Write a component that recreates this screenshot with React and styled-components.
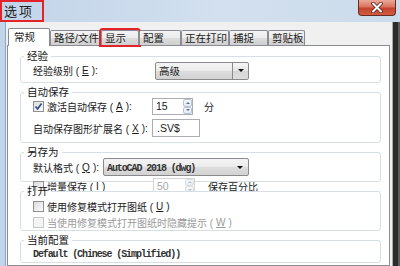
import React from "react";
import styled, { createGlobalStyle } from "styled-components";

const GlobalStyle = createGlobalStyle`
  html, body { margin: 0; padding: 0; background: #fff; }
  body { font-family: "Liberation Sans", "Noto Sans CJK SC", sans-serif; color: #1a1a1a; }
`;

const RED = "#e2232a";

const Window = styled.div`
  width: 400px;
  height: 266px;
  overflow: hidden;
  display: flex;
  flex-direction: column;
  background: linear-gradient(90deg, #c2d4e9, #d2e0ef 55%, #ccdbeb);
`;

const TitleBar = styled.div`
  flex: none;
  height: 22px;
  display: flex;
  align-items: flex-start;
  justify-content: space-between;
`;

const TitleMark = styled.div`
  box-sizing: border-box;
  width: 44px;
  height: 22px;
  border: 2px solid ${RED};
  padding-left: 2px;
  font-size: 13px;
  line-height: 19px;
  letter-spacing: 2px;
  color: #222;
`;

const CloseButton = styled.div`
  box-sizing: border-box;
  width: 38px;
  height: 16px;
  margin-right: 4px;
  border: 1px solid #6b2a22;
  border-top: none;
  border-radius: 0 0 4px 4px;
  background: linear-gradient(#eba898, #d9735f 45%, #c3432f 55%, #d25d43);
  display: flex;
  align-items: center;
  justify-content: center;
`;

const Body = styled.div`
  flex: 1;
  display: flex;
  min-height: 0;
`;

const LeftFrame = styled.div`
  width: 5px;
  border-right: 1px solid #8fa6c1;
`;

const RightFrame = styled.div`
  width: 8px;
  background: linear-gradient(90deg, #a8a8a8 0 1px, #2b2b2b 1px 6px, #5c5c5c 6px);
`;

const Client = styled.div`
  flex: 1;
  background: #f0f0f0;
  padding: 6px 2px 0 1px;
  display: flex;
  flex-direction: column;
`;

const TabStrip = styled.div`
  height: 17px;
  padding-left: 1px;
  display: flex;
  align-items: flex-end;
`;

const Tab = styled.div`
  box-sizing: border-box;
  flex: none;
  width: ${(p) => p.$w}px;
  height: ${(p) => (p.$active ? 18 : 15)}px;
  margin-bottom: ${(p) => (p.$active ? -1 : 0)}px;
  position: relative;
  z-index: ${(p) => (p.$active ? 2 : 1)};
  border: 1px solid #898c95;
  border-bottom: none;
  border-radius: 2px 2px 0 0;
  background: ${(p) => (p.$active ? "#fff" : "linear-gradient(#f3f3f3, #ebebeb 50%, #dddddd 51%, #cfcfcf)")};
  padding-left: ${(p) => (p.$active ? 5 : 3)}px;
  font-size: 10.5px;
  line-height: ${(p) => (p.$active ? 16 : 14)}px;
  white-space: nowrap;
  overflow: hidden;
  outline: ${(p) => (p.$marked ? `2px solid ${RED}` : "none")};
`;

const TabPage = styled.div`
  flex: 1;
  background: #fff;
  border: 1px solid #898c95;
  padding: 4px 8px 0 12px;
  display: flex;
  flex-direction: column;
  gap: 3px;
`;

const Group = styled.fieldset`
  flex: none;
  margin: 0;
  min-width: 0;
  border: 1px solid #d5dfe5;
  border-radius: 3px;
  padding: 0 8px ${(p) => p.$pb ?? 0}px 12px;
  position: ${(p) => (p.$cover ? "relative" : "static")};
  background: #fff;
  display: flex;
  flex-direction: column;
  gap: ${(p) => p.$gap ?? 0}px;
`;

const Legend = styled.legend`
  margin-left: -9px;
  padding: 0 3px;
  font-size: 10.5px;
  line-height: 12px;
  color: #151515;
`;

const Clip = styled.div`
  height: ${(p) => p.$h}px;
  display: flex;
  flex-direction: column;
`;

const Row = styled.div`
  flex: none;
  height: ${(p) => p.$h}px;
  margin-top: ${(p) => p.$mt ?? 0}px;
  display: flex;
  align-items: center;
  font-size: 10px;
  white-space: nowrap;
  color: ${(p) => (p.$disabled ? "#9a9a9a" : "#1a1a1a")};
`;

const Label = styled.span`
  flex: none;
  width: ${(p) => p.$w}px;
  display: flex;
  align-items: center;
  gap: 3px;
`;

const Box = styled.span`
  box-sizing: border-box;
  flex: none;
  width: 11px;
  height: 11px;
  border: 1px solid ${(p) => (p.$disabled ? "#c6c6c6" : "#8e8f8f")};
  background: ${(p) => (p.$disabled ? "#f4f4f4" : "linear-gradient(135deg, #dcdcdc, #fbfbfb)")};
  display: flex;
  align-items: center;
  justify-content: center;
`;

const Combo = styled.div`
  box-sizing: border-box;
  flex: none;
  width: ${(p) => p.$w}px;
  height: 18px;
  border: 1px solid #8a8a8a;
  border-radius: 2px;
  background: linear-gradient(#f4f4f4, #ebebeb 50%, #dddddd 51%, #d2d2d2);
  display: flex;
  align-items: center;
`;

const ComboText = styled.span`
  flex: 1;
  padding-left: 3px;
  font-size: 10.5px;
`;

const Arrow = styled.span`
  box-sizing: border-box;
  width: 16px;
  height: 16px;
  border-left: ${(p) => (p.$split ? "1px solid #8a8a8a" : "none")};
  border-radius: 0 2px 2px 0;
  background: ${(p) => (p.$split ? "linear-gradient(#f7f7f7, #e4e4e4 50%, #d6d6d6 51%, #dedede)" : "transparent")};
  display: flex;
  align-items: center;
  justify-content: center;
  &::after {
    content: "";
    border-left: 3px solid transparent;
    border-right: 3px solid transparent;
    border-top: 3px solid #111;
  }
`;

const Spinner = styled.div`
  box-sizing: border-box;
  flex: none;
  width: ${(p) => p.$w}px;
  height: 17px;
  border: 1px solid ${(p) => (p.$disabled ? "#d4d4d4" : "#abadb3")};
  background: #fff;
  display: flex;
  color: ${(p) => (p.$disabled ? "#a8a8a8" : "#1a1a1a")};
`;

const SpinValue = styled.span`
  flex: 1;
  padding-left: 3px;
  font-size: 10.5px;
  line-height: 15px;
`;

const SpinButtons = styled.span`
  width: 9px;
  display: flex;
  flex-direction: column;
`;

const SpinHalf = styled.span`
  flex: 1;
  border: 1px solid ${(p) => (p.$disabled ? "#dedede" : "#b8c4d6")};
  border-radius: 2px;
  background: linear-gradient(#f6f9fc, #e2e9f2);
  display: flex;
  align-items: center;
  justify-content: center;
  &::after {
    content: "";
    border-left: 2px solid transparent;
    border-right: 2px solid transparent;
    ${(p) => (p.$up ? "border-bottom" : "border-top")}: 2px solid ${(p) => (p.$disabled ? "#c0c0c0" : "#5a6d8c")};
  }
`;

const TextInput = styled.div`
  box-sizing: border-box;
  flex: none;
  width: ${(p) => p.$w}px;
  height: 18px;
  border: 1px solid #abadb3;
  padding-left: 4px;
  font-size: 10.5px;
  line-height: 16px;
`;

const Unit = styled.span`
  margin-left: ${(p) => p.$ml}px;
`;

const Mono = styled.span`
  font-family: "Liberation Mono", "DejaVu Sans Mono", monospace;
  font-size: 10px;
  font-weight: 700;
  letter-spacing: -1.1px;
  color: #333;
`;

const Check = ({ checked, disabled }) => (
  <Box $disabled={disabled}>
    {checked && (
      <svg width="9" height="9" viewBox="0 0 9 9">
        <path d="M1.5 4.5 L3.6 6.8 L7.6 1.5" fill="none" stroke="#31508f" strokeWidth="1.7" />
      </svg>
    )}
  </Box>
);

const Spin = ({ value, width, disabled }) => (
  <Spinner $w={width} $disabled={disabled}>
    <SpinValue>{value}</SpinValue>
    <SpinButtons>
      <SpinHalf $up $disabled={disabled} />
      <SpinHalf $disabled={disabled} />
    </SpinButtons>
  </Spinner>
);

const tabs = [
  { label: "常规", w: 42, active: true },
  { label: "路径/文件", w: 51 },
  { label: "显示", w: 38, marked: true },
  { label: "配置", w: 42 },
  { label: "正在打印", w: 48 },
  { label: "捕捉", w: 39 },
  { label: "剪贴板", w: 37 },
];

export default function App() {
  return (
    <>
      <GlobalStyle />
      <Window>
        <TitleBar>
          <TitleMark>选项</TitleMark>
          <CloseButton>
            <svg width="14" height="11" viewBox="0 0 14 11">
              <path d="M3 1.5 L11 9.5 M11 1.5 L3 9.5" stroke="#5a1d14" strokeWidth="3.6" strokeLinecap="round" />
              <path d="M3 1.5 L11 9.5 M11 1.5 L3 9.5" stroke="#fff" strokeWidth="2" strokeLinecap="round" />
            </svg>
          </CloseButton>
        </TitleBar>
        <Body>
          <LeftFrame />
          <Client>
            <TabStrip>
              {tabs.map((t) => (
                <Tab key={t.label} $w={t.w} $active={t.active} $marked={t.marked}>
                  {t.label}
                </Tab>
              ))}
            </TabStrip>
            <TabPage>
              <Group $pb={3}>
                <Legend>经验</Legend>
                <Row $h={17}>
                  <Label $w={122}>
                    经验级别 (<u>E</u>):
                  </Label>
                  <Combo $w={94}>
                    <ComboText>高级</ComboText>
                    <Arrow $split />
                  </Combo>
                </Row>
              </Group>

              <Group $pb={5} $gap={4}>
                <Legend>自动保存</Legend>
                <Row $h={17}>
                  <Label $w={119}>
                    <Check checked />
                    激活自动保存 (<u>A</u>):
                  </Label>
                  <Spin value="15" width={41} />
                  <Unit $ml={11}>分</Unit>
                </Row>
                <Row $h={18}>
                  <Label $w={119}>
                    自动保存图形扩展名 (<u>X</u>):
                  </Label>
                  <TextInput $w={48}>.SV$</TextInput>
                </Row>
              </Group>

              <Group>
                <Legend>另存为</Legend>
                <Clip $h={23}>
                  <Row $h={18}>
                    <Label $w={70}>
                      默认格式 (<u>Q</u>):
                    </Label>
                    <Combo $w={146}>
                      <ComboText>
                        <Mono>AutoCAD 2018 (dwg)</Mono>
                      </ComboText>
                      <Arrow />
                    </Combo>
                  </Row>
                  <Row $h={16} $mt={2}>
                    <Label $w={120}>
                      <Check />
                      增量保存 (<u>I</u>)
                    </Label>
                    <Spin value="50" width={42} disabled />
                    <Unit $ml={13}>保存百分比</Unit>
                  </Row>
                </Clip>
              </Group>

              <Group $cover>
                <Legend>打开</Legend>
                <Row $h={16} $mt={1}>
                  <Label $w={200}>
                    <Check />
                    使用修复模式打开图纸 (<u>U</u>)
                  </Label>
                </Row>
                <Row $h={16} $disabled>
                  <Label $w={240}>
                    <Check disabled />
                    当使用修复模式打开图纸时隐藏提示 (<u>W</u>)
                  </Label>
                </Row>
              </Group>

              <Group $cover>
                <Legend>当前配置</Legend>
                <Row $h={16}>
                  <Mono>Default (Chinese (Simplified))</Mono>
                </Row>
              </Group>
            </TabPage>
          </Client>
          <RightFrame />
        </Body>
      </Window>
    </>
  );
}
